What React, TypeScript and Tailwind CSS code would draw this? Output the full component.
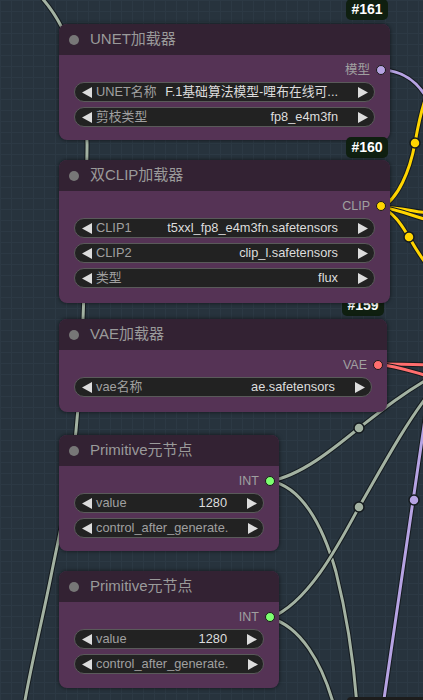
import React from 'react'

type WidgetDef = { label: string; value?: string }

interface NodeProps {
  top: number
  width: number
  height: number
  title: string
  output: string
  slotColor: string
  widgets: WidgetDef[]
}

const LeftArrow = () => (
  <svg width="10" height="11" viewBox="0 0 10 11" className="shrink-0">
    <path d="M0 5.5 L10 0 L10 11 Z" fill="#dddddd" />
  </svg>
)

const RightArrow = () => (
  <svg width="10" height="11" viewBox="0 0 10 11" className="shrink-0">
    <path d="M10 5.5 L0 0 L0 11 Z" fill="#dddddd" />
  </svg>
)

function Widget({ label, value }: WidgetDef) {
  return (
    <div className="h-5 mx-[15px] rounded-full border border-[#5a5a5a] bg-[#222222] flex items-center pl-[7px] pr-[6px] text-[12.8px] leading-none overflow-hidden">
      <LeftArrow />
      <span className="ml-1 text-[#a0a0a0] whitespace-nowrap">{label}</span>
      <span className="ml-auto mr-5 text-[#dddddd] whitespace-nowrap">{value}</span>
      <RightArrow />
    </div>
  )
}

function Node({ top, width, height, title, output, slotColor, widgets }: NodeProps) {
  return (
    <div
      className="absolute left-[59px] rounded-lg overflow-hidden bg-[#553355] shadow-[0_0_4px_rgba(0,0,0,0.6)]"
      style={{ top, width, height }}
    >
      {/* title bar */}
      <div className="h-[31px] bg-[#332233] flex items-center pl-[10px] gap-[11px]">
        <div className="w-[10px] h-[10px] rounded-full bg-[#777777]" />
        <span className="text-[15px] text-[#9a9a9a] whitespace-nowrap">{title}</span>
      </div>

      {/* body */}
      <div className="pt-[5px]">
        <div className="h-5 flex items-center justify-end pr-[4px] gap-[6px]">
          <span className="text-[12.5px] text-[#a0a0a0]">{output}</span>
          <div
            className="w-[10px] h-[10px] rounded-full border-[1.5px] border-[#1a1a1a]"
            style={{ backgroundColor: slotColor }}
          />
        </div>
        <div className="mt-[2px] flex flex-col gap-[5px]">
          {widgets.map((w) => (
            <Widget key={w.label} label={w.label} value={w.value} />
          ))}
        </div>
      </div>
    </div>
  )
}

function Badge({ top, left, text }: { top: number; left: number; text: string }) {
  return (
    <div
      className="absolute w-[42px] h-[21px] rounded-[5px] bg-[#0f1f10] flex items-center justify-center text-[14px] font-bold text-white"
      style={{ top, left }}
    >
      {text}
    </div>
  )
}

function Wire({ d, color }: { d: string; color: string }) {
  return (
    <>
      <path d={d} fill="none" stroke="#141a1e" strokeWidth="5" strokeLinecap="round" />
      <path d={d} fill="none" stroke={color} strokeWidth="3" strokeLinecap="round" />
    </>
  )
}

function Dot({ x, y, color }: { x: number; y: number; color: string }) {
  return <circle cx={x} cy={y} r="5" fill={color} stroke="#141a1e" strokeWidth="1.5" />
}

const GRAY = '#a3b2a2'
const PURPLE = '#b6a3e3'
const YELLOW = '#ffd500'
const RED = '#ff6e6e'

export default function App() {
  return (
    <div className="relative w-[423px] h-[700px] overflow-hidden bg-[#27333d] bg-[linear-gradient(to_right,#2c3944_1px,transparent_1px),linear-gradient(to_bottom,#2c3944_1px,transparent_1px)] bg-[size:11px_11px] font-['Liberation_Sans','Noto_Sans_CJK_SC',sans-serif]">
      {/* links */}
      <svg className="absolute inset-0" width="423" height="700" viewBox="0 0 423 700">
        <Wire d="M40 -4 C72 30 88 90 87 150 S86 280 80 380 S62 520 52 571 S32 660 24 706" color={GRAY} />
        <Wire d="M381 70 C402 70 418 82 428 100" color={PURPLE} />
        <Wire d="M426 412 L383 706" color={PURPLE} />

        <Wire d="M381 207 C398 200 410 170 415 143 C419 120 422 106 428 92" color={YELLOW} />
        <Wire d="M381 207 C400 208 412 211 428 213" color={YELLOW} />
        <Wire d="M381 207 C400 210 412 216 428 220" color={YELLOW} />
        <Wire d="M381 207 C396 214 403 228 409 237 C414 246 420 256 428 266" color={YELLOW} />

        <Wire d="M377 364 C395 364 408 364 428 365" color={RED} />
        <Wire d="M377 364 C396 366 410 371 428 376" color={RED} />

        <Wire d="M270 481 C300 476 332 450 359 428 C382 410 402 394 428 379" color={GRAY} />
        <Wire d="M270 481 C300 486 322 522 336 572 C346 612 353 652 357 706" color={GRAY} />
        <Wire d="M428 395 C405 425 385 462 359 507 C338 546 308 603 270 618" color={GRAY} />
        <Wire d="M270 618 C300 626 322 662 334 706" color={GRAY} />

        <Dot x={415} y={143} color={YELLOW} />
        <Dot x={409} y={237} color={YELLOW} />
        <Dot x={359} y={428} color={GRAY} />
        <Dot x={359} y={507} color={GRAY} />
        <Dot x={414} y={500} color={PURPLE} />

        <rect x="347" y="697" width="90" height="12" rx="4" fill="#1c1c1c" />
      </svg>

      <Badge top={-1} left={346} text="#161" />
      <Node
        top={24}
        width={331}
        height={116}
        title="UNET加载器"
        output="模型"
        slotColor={PURPLE}
        widgets={[
          { label: 'UNET名称', value: 'F.1基础算法模型-哩布在线可...' },
          { label: '剪枝类型', value: 'fp8_e4m3fn' },
        ]}
      />
      <Badge top={137} left={346} text="#160" />
      <Badge top={295} left={342} text="#159" />
      <Node
        top={160}
        width={331}
        height={143}
        title="双CLIP加载器"
        output="CLIP"
        slotColor={YELLOW}
        widgets={[
          { label: 'CLIP1', value: 't5xxl_fp8_e4m3fn.safetensors' },
          { label: 'CLIP2', value: 'clip_l.safetensors' },
          { label: '类型', value: 'flux' },
        ]}
      />
      <Node
        top={319}
        width={328}
        height={93}
        title="VAE加载器"
        output="VAE"
        slotColor={RED}
        widgets={[{ label: 'vae名称', value: 'ae.safetensors' }]}
      />
      <Node
        top={435}
        width={220}
        height={116}
        title="Primitive元节点"
        output="INT"
        slotColor="#7dff70"
        widgets={[
          { label: 'value', value: '1280' },
          { label: 'control_after_generate.' },
        ]}
      />
      <Node
        top={571}
        width={220}
        height={117}
        title="Primitive元节点"
        output="INT"
        slotColor="#7dff70"
        widgets={[
          { label: 'value', value: '1280' },
          { label: 'control_after_generate.' },
        ]}
      />
    </div>
  )
}
